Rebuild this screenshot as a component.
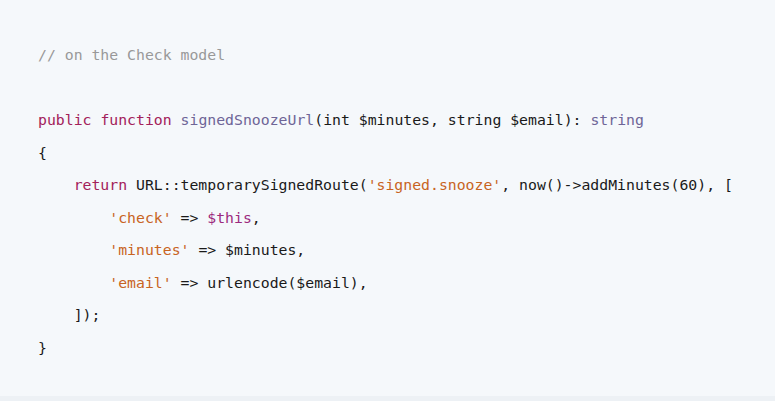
const kw = "text-[#a3215a]";
const fn = "text-[#6e6597]";
const str = "text-[#c8641f]";
const vr = "text-[#9c2a7e]";

export default function App() {
  return (
    <div className="w-[775px] h-[401px] bg-[#edf1f5]">
      <pre className="h-[396px] bg-[#f5f8fb] pl-[38px] pt-[39px] font-['DejaVu_Sans_Mono',monospace] text-[14.8px] leading-[32.5px] text-[#1a1a1a]">
        <div className="text-[#999999]">// on the Check model</div>
        <div>&nbsp;</div>
        <div>
          <span className={kw}>public</span> <span className={kw}>function</span>{" "}
          <span className={fn}>signedSnoozeUrl</span>(int $minutes, string $email):{" "}
          <span className={fn}>string</span>
        </div>
        <div>{"{"}</div>
        <div>
          {"    "}
          <span className={kw}>return</span> URL::temporarySignedRoute(
          <span className={str}>'signed.snooze'</span>, now()-&gt;addMinutes(60), [
        </div>
        <div>
          {"        "}
          <span className={str}>'check'</span> =&gt; <span className={vr}>$this</span>,
        </div>
        <div>
          {"        "}
          <span className={str}>'minutes'</span> =&gt; $minutes,
        </div>
        <div>
          {"        "}
          <span className={str}>'email'</span> =&gt; urlencode($email),
        </div>
        <div>{"    "}]);</div>
        <div>{"}"}</div>
      </pre>
    </div>
  );
}
